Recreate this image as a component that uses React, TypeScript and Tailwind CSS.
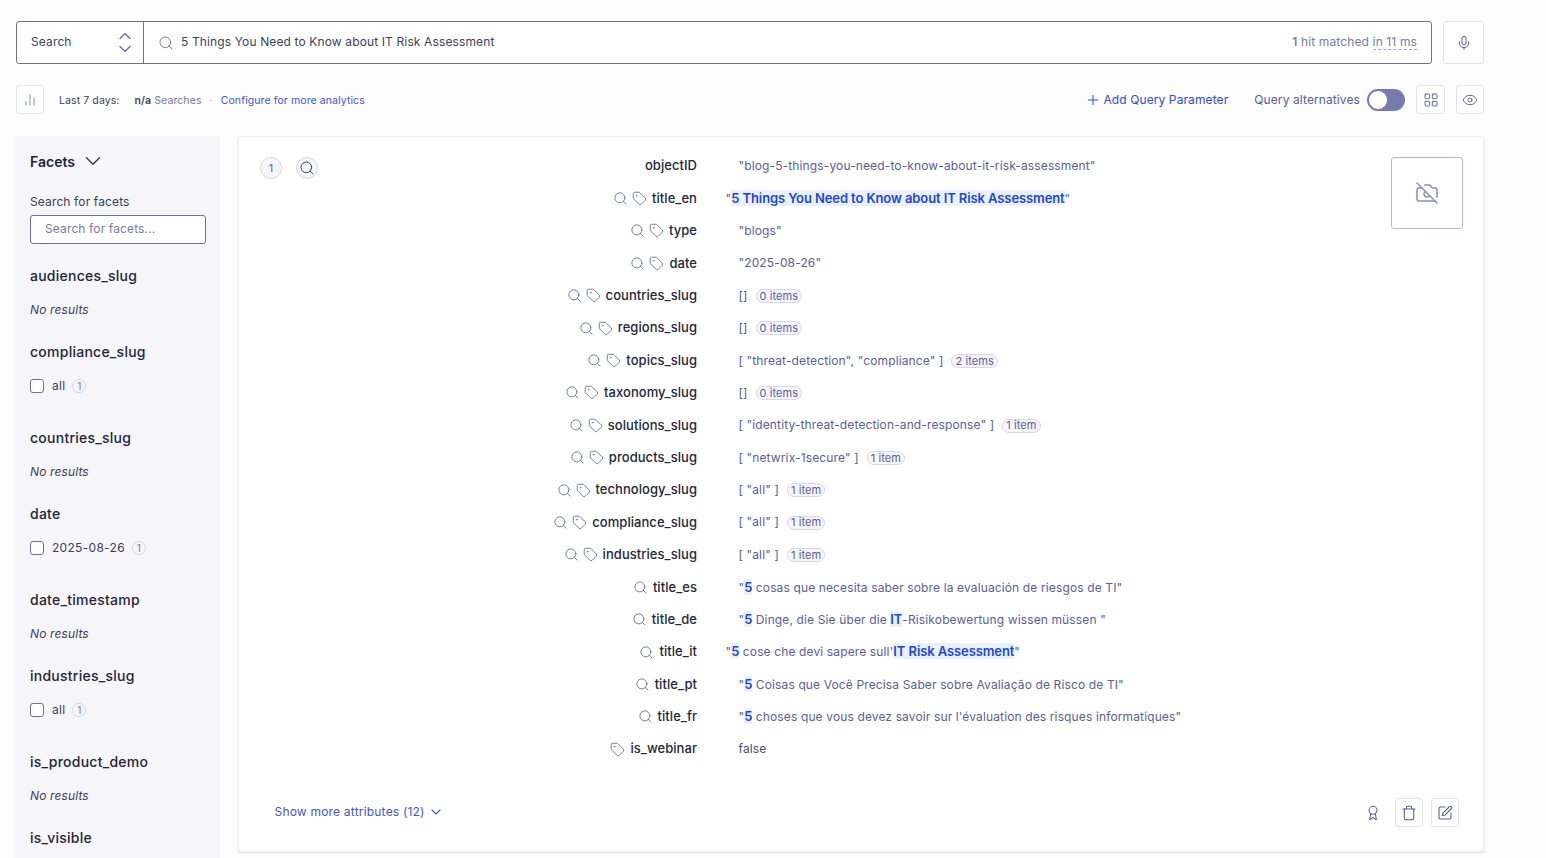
import { Award, CameraOff, ChartNoAxesColumn, ChevronDown, ChevronUp, Eye, LayoutGrid, Mic, Plus, Search, SquarePen, Tag, Trash } from "lucide-react";
import type { ReactNode } from "react";

const Hl = ({ children }: { children: ReactNode }) => (
  <span className="bg-[#eaf0fe] text-[13px] font-semibold tracking-[-0.1px] text-[#1c46dc]">{children}</span>
);

const Pill = ({ children }: { children: ReactNode }) => (
  <span className="ml-[8px] inline-flex h-[14px] items-center rounded-full border border-[#d6d6e7] bg-[#f5f5fa] px-[3px] text-[11px] tracking-[0.1px] text-[#5a5e9a]">
    {children}
  </span>
);

type Attr = { name: string; search?: boolean; tag?: boolean; value: ReactNode; hang?: boolean };

const attrs: Attr[] = [
  { name: "objectID", value: '"blog-5-things-you-need-to-know-about-it-risk-assessment"' },
  {
    name: "title_en",
    search: true,
    tag: true,
    hang: true,
    value: (
      <>
        "<Hl>5 Things You Need to Know about IT Risk Assessment</Hl>"
      </>
    ),
  },
  { name: "type", search: true, tag: true, value: '"blogs"' },
  { name: "date", search: true, tag: true, value: '"2025-08-26"' },
  { name: "countries_slug", search: true, tag: true, value: <>[]<Pill>0 items</Pill></> },
  { name: "regions_slug", search: true, tag: true, value: <>[]<Pill>0 items</Pill></> },
  { name: "topics_slug", search: true, tag: true, value: <>[ "threat-detection", "compliance" ]<Pill>2 items</Pill></> },
  { name: "taxonomy_slug", search: true, tag: true, value: <>[]<Pill>0 items</Pill></> },
  { name: "solutions_slug", search: true, tag: true, value: <>[ "identity-threat-detection-and-response" ]<Pill>1 item</Pill></> },
  { name: "products_slug", search: true, tag: true, value: <>[ "netwrix-1secure" ]<Pill>1 item</Pill></> },
  { name: "technology_slug", search: true, tag: true, value: <>[ "all" ]<Pill>1 item</Pill></> },
  { name: "compliance_slug", search: true, tag: true, value: <>[ "all" ]<Pill>1 item</Pill></> },
  { name: "industries_slug", search: true, tag: true, value: <>[ "all" ]<Pill>1 item</Pill></> },
  { name: "title_es", search: true, value: <>"<Hl>5</Hl> cosas que necesita saber sobre la evaluación de riesgos de TI"</> },
  { name: "title_de", search: true, value: <>"<Hl>5</Hl> Dinge, die Sie über die <Hl>IT</Hl>-Risikobewertung wissen müssen "</> },
  { name: "title_it", search: true, hang: true, value: <>"<Hl>5</Hl> cose che devi sapere sull'<Hl>IT Risk Assessment</Hl>"</> },
  { name: "title_pt", search: true, value: <>"<Hl>5</Hl> Coisas que Você Precisa Saber sobre Avaliação de Risco de TI"</> },
  { name: "title_fr", search: true, value: <>"<Hl>5</Hl> choses que vous devez savoir sur l'évaluation des risques informatiques"</> },
  { name: "is_webinar", tag: true, value: <span className="text-[#484c7a]">false</span> },
];

type Facet = { name: string; item?: string; cut?: boolean };

const facets: Facet[] = [
  { name: "audiences_slug" },
  { name: "compliance_slug", item: "all" },
  { name: "countries_slug" },
  { name: "date", item: "2025-08-26" },
  { name: "date_timestamp" },
  { name: "industries_slug", item: "all" },
  { name: "is_product_demo" },
  { name: "is_visible", cut: true },
];

const IconBtn = ({ children, className }: { children: ReactNode; className: string }) => (
  <button className={`flex items-center justify-center rounded-[3px] border border-[#e3e3ee] bg-white text-[#5a5e9a] ${className}`}>
    {children}
  </button>
);

export default function App() {
  return (
    <div
      className="h-[858px] w-[1546px] overflow-hidden bg-[#fcfcfd] pl-4 pt-[21px] text-[12px] tracking-[0.13px] text-[#23263b]"
      style={{ fontFamily: "Inter, 'Liberation Sans', sans-serif" }}
    >
      <div className="w-[1468px]">
        <div className="flex gap-[11px]">
          <div className="flex h-[43px] w-[1416px] rounded-[3px] border border-[#6f6f9f] bg-white">
            <div className="flex w-[127px] items-center justify-between border-r border-[#6f6f9f] pl-[14px] pr-[8px] text-[#3c3f5c]">
              <span className="pb-[2px]">Search</span>
              <span className="flex flex-col items-center text-[#6f72a3]">
                <ChevronUp className="-mb-[7.5px] size-[20px]" strokeWidth={1.6} />
                <ChevronDown className="size-[20px]" strokeWidth={1.6} />
              </span>
            </div>
            <div className="flex flex-1 items-center pl-[14px] pr-[14px]">
              <Search className="mr-[7px] size-[16px] text-[#777aaf]" strokeWidth={1.5} />
              <span className="flex-1 pb-[2px] text-[#3c3f5c]">5 Things You Need to Know about IT Risk Assessment</span>
              <span className="pb-[2px] text-[#777aaf]">
                <b className="font-semibold">1</b> hit matched{" "}
                <span className="border-b border-dashed border-[#a3a5c9]">in 11 ms</span>
              </span>
            </div>
          </div>
          <IconBtn className="h-[43px] w-[41px]">
            <Mic className="size-[16px]" strokeWidth={1.5} />
          </IconBtn>
        </div>

        <div className="mt-[21px] flex h-[29px] items-center">
          <IconBtn className="h-[29px] w-[28px]">
            <ChartNoAxesColumn className="size-[14px] text-[#8a8db8]" strokeWidth={1.7} />
          </IconBtn>
          <div className="flex items-center pt-[2px] text-[10.5px] tracking-[0.1px]">
            <span className="ml-[15px] text-[#3c3f5c]">Last 7 days:</span>
            <span className="ml-[15px] font-semibold text-[#3c3f5c]">n/a</span>
            <span className="ml-[3px] text-[#777aaf]">Searches</span>
            <span className="ml-[8px] text-[#a3a5c9]">·</span>
            <a className="ml-[8px] text-[#3f56d8]">Configure for more analytics</a>
          </div>
          <a className="ml-auto flex items-center tracking-[0.1px] text-[#2f4bd8]">
            <Plus className="mr-[2px] size-[16px]" strokeWidth={1.5} />
            Add Query Parameter
          </a>
          <span className="ml-[26px] tracking-[0.1px] text-[#5a5e9a]">Query alternatives</span>
          <span className="ml-[7px] flex h-[22px] w-[38px] items-center rounded-full bg-[#777aaf] pl-[1px]">
            <span className="size-[20px] rounded-full border border-[#777aaf] bg-white" />
          </span>
          <IconBtn className="ml-[11px] h-[29px] w-[29px]">
            <LayoutGrid className="size-[16px]" strokeWidth={1.4} />
          </IconBtn>
          <IconBtn className="ml-[11px] h-[29px] w-[28px]">
            <Eye className="size-[16px]" strokeWidth={1.4} />
          </IconBtn>
        </div>

        <div className="mt-[22px] flex items-start">
          <aside className="-ml-px h-[722px] w-[205px] shrink-0 overflow-hidden bg-[#f5f5fa] pl-[15px] pr-[14px] pt-[15px]">
            <div className="flex h-[20px] items-center text-[14px] font-semibold tracking-normal">
              Facets
              <ChevronDown className="ml-[5px] size-[26px] text-[#3c3f5c]" strokeWidth={1.3} />
            </div>
            <div className="mt-[22px] h-[18px] leading-[18px] text-[#3c3f5c]">Search for facets</div>
            <div className="mt-[4px] flex h-[29px] items-center rounded-[3px] border border-[#6f6f9f] bg-white pb-[1px] pl-[14px] text-[#777aaf]">
              Search for facets...
            </div>
            <div className="mt-[22px]">
              {facets.map((f) => (
                <div key={f.name} className={f.item ? "h-[86px]" : "h-[76px]"}>
                  <div className="h-[20px] text-[14px] font-medium leading-[20px] tracking-[0.25px]">{f.name}</div>
                  {f.item ? (
                    <div className="mt-[14px] flex h-[20px] items-center">
                      <span className="size-[14px] rounded-[3px] border border-[#6f6f9f] bg-white" />
                      <span className="ml-[8px] tracking-[0.3px] text-[#3c3f5c]">{f.item}</span>
                      <span className="ml-[7px] flex size-[14px] items-center justify-center rounded-full border border-[#d6d6e7] text-[10px] text-[#777aaf]">
                        1
                      </span>
                    </div>
                  ) : f.cut ? null : (
                    <div className="mt-[14px] h-[20px] italic leading-[20px] text-[#3c3f5c]">No results</div>
                  )}
                </div>
              ))}
            </div>
          </aside>

          <section className="ml-[18px] flex h-[716px] w-[1246px] flex-col rounded-[3px] border border-[#f0f0f5] bg-white shadow-[0_1px_2px_rgba(35,38,59,0.14)]">
            <div className="flex flex-1 pl-[21px] pr-[20px] pt-[13px]">
              <div className="flex w-[60px] shrink-0 items-start gap-[14px] pt-[7px]">
                <span className="flex size-[22px] items-center justify-center rounded-full border border-[#d6d6e7] bg-[#f5f5fa] text-[11px] text-[#5a5e9a]">
                  1
                </span>
                <span className="flex size-[22px] items-center justify-center rounded-full border border-[#d6d6e7] bg-[#f5f5fa] text-[#3c3f5c]">
                  <Search className="size-[16px]" strokeWidth={1.5} />
                </span>
              </div>
              <div className="flex-1">
                {attrs.map((a) => (
                  <div key={a.name} className="flex h-[32.4px] items-center">
                    <div className="flex w-[377px] shrink-0 items-center justify-end">
                      {a.search && <Search className="size-[15px] text-[#6f72a3]" strokeWidth={1.5} />}
                      {a.tag && <Tag className="ml-[4px] size-[15px] text-[#6f72a3]" strokeWidth={1.5} />}
                      <span className="ml-[5px] text-[13px] font-medium tracking-[0.05px]">{a.name}</span>
                    </div>
                    <div className={`whitespace-nowrap text-[#5a5e9a] ${a.hang ? "ml-[28.5px]" : "ml-[41.5px]"}`}>{a.value}</div>
                  </div>
                ))}
              </div>
              <div className="mt-[7px] flex size-[72px] shrink-0 items-center justify-center rounded-[3px] border border-[#b6b7d5] bg-white">
                <CameraOff className="size-[24px] text-[#8a8db8]" strokeWidth={1.5} />
              </div>
            </div>
            <div className="flex h-[54px] shrink-0 items-start pl-[35.5px] pr-[24px] pt-[1px]">
              <a className="mt-[5px] flex items-center tracking-[0.2px] text-[#3f56d8]">
                Show more attributes (12)
                <ChevronDown className="ml-[3px] size-[16px]" strokeWidth={1.7} />
              </a>
              <Award className="ml-auto mt-[7px] size-[16px] text-[#5a5e9a]" strokeWidth={1.6} />
              <IconBtn className="ml-[14px] h-[29px] w-[28px]">
                <Trash className="size-[16px]" strokeWidth={1.6} />
              </IconBtn>
              <IconBtn className="ml-[8px] h-[29px] w-[28px]">
                <SquarePen className="size-[16px]" strokeWidth={1.6} />
              </IconBtn>
            </div>
          </section>
        </div>
      </div>
    </div>
  );
}
